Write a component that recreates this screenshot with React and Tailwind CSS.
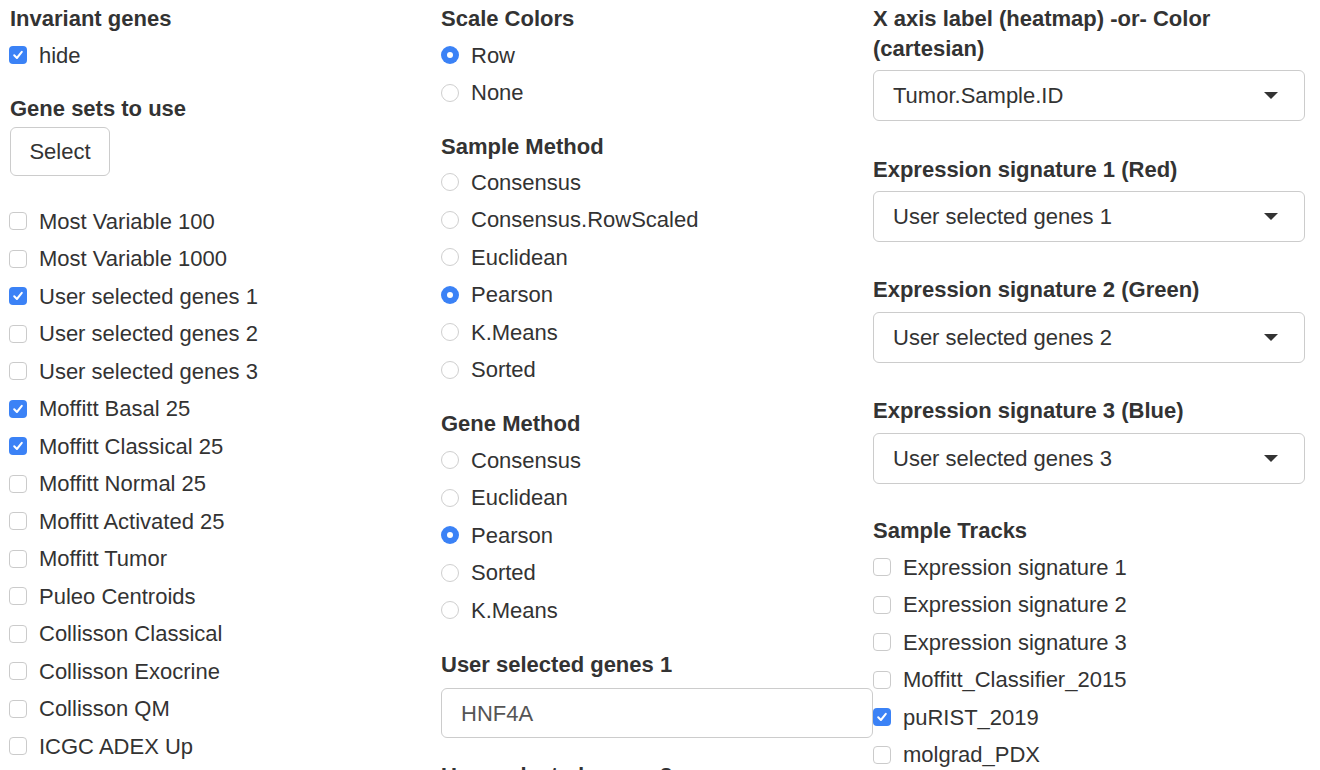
import React from "react";

const geneSets = [
  ["Most Variable 100", false],
  ["Most Variable 1000", false],
  ["User selected genes 1", true],
  ["User selected genes 2", false],
  ["User selected genes 3", false],
  ["Moffitt Basal 25", true],
  ["Moffitt Classical 25", true],
  ["Moffitt Normal 25", false],
  ["Moffitt Activated 25", false],
  ["Moffitt Tumor", false],
  ["Puleo Centroids", false],
  ["Collisson Classical", false],
  ["Collisson Exocrine", false],
  ["Collisson QM", false],
  ["ICGC ADEX Up", false],
];

const tracks = [
  ["Expression signature 1", false],
  ["Expression signature 2", false],
  ["Expression signature 3", false],
  ["Moffitt_Classifier_2015", false],
  ["puRIST_2019", true],
  ["molgrad_PDX", false],
];

const Check = ({ on }) =>
  on ? (
    <span className="w-[18px] h-[18px] rounded-[4px] bg-[#3b82f6] flex items-center justify-center shrink-0">
      <svg width="12" height="12" viewBox="0 0 12 12">
        <path d="M2.2 6.3 L4.9 9 L9.8 2.9" fill="none" stroke="white" strokeWidth="2" strokeLinecap="round" strokeLinejoin="round" />
      </svg>
    </span>
  ) : (
    <span className="block w-[18px] h-[18px] rounded-[4px] border border-[#cbcbcb] bg-white shrink-0" />
  );

const Radio = ({ on }) =>
  on ? (
    <span className="w-[18px] h-[18px] rounded-full bg-[#3b82f6] flex items-center justify-center shrink-0">
      <span className="w-[6px] h-[6px] rounded-full bg-white" />
    </span>
  ) : (
    <span className="block w-[18px] h-[18px] rounded-full border border-[#cfcfcf] bg-white shrink-0" />
  );

const CheckRow = ({ label, on }) => (
  <div className="flex items-center h-[30px]">
    <Check on={on} />
    <span className="ml-[12px]">{label}</span>
  </div>
);

const RadioRow = ({ label, on }) => (
  <div className="flex items-center h-[30px]">
    <Radio on={on} />
    <span className="ml-[12px]">{label}</span>
  </div>
);

const Label = ({ children, className = "" }) => (
  <div className={`font-bold leading-[30px] ${className}`}>{children}</div>
);

const Select = ({ value, className = "" }) => (
  <div className={`h-[51px] rounded-[6px] border-[1.5px] border-[#cccccc] flex items-center justify-between pl-[19px] pr-[26px] ${className}`}>
    <span>{value}</span>
    <svg width="14" height="7" viewBox="0 0 14 7">
      <path d="M0 0 H14 L7 7 Z" fill="#333" />
    </svg>
  </div>
);

const App = () => {
  return (
    <div
      className="w-[1320px] h-[770px] overflow-hidden bg-white text-[#333] text-[22px] grid grid-cols-[432px_432px_432px] pl-[9px]"
      style={{ fontFamily: '"Liberation Sans", Arial, sans-serif' }}
    >
      {/* Left column */}
      <div className="pt-[4px]">
        <Label className="ml-[1px]">Invariant genes</Label>
        <div className="mt-[6px]">
          <CheckRow label="hide" on />
        </div>
        <Label className="mt-[24px] ml-[1px]">Gene sets to use</Label>
        <button className="mt-[3px] ml-[1px] w-[100px] h-[49px] rounded-[6px] border-[1.5px] border-[#cccccc] bg-white text-[#333]">
          Select
        </button>
        <div className="mt-[30px] flex flex-col gap-[7.5px]">
          {geneSets.map(([label, on]) => (
            <CheckRow key={label} label={label} on={on} />
          ))}
        </div>
      </div>

      {/* Middle column */}
      <div className="pt-[4px]">
        <Label>Scale Colors</Label>
        <div className="mt-[6px] flex flex-col gap-[7.5px]">
          <RadioRow label="Row" on />
          <RadioRow label="None" />
        </div>
        <Label className="mt-[24.5px]">Sample Method</Label>
        <div className="mt-[5px] flex flex-col gap-[7.5px]">
          {["Consensus", "Consensus.RowScaled", "Euclidean", "Pearson", "K.Means", "Sorted"].map((m) => (
            <RadioRow key={m} label={m} on={m === "Pearson"} />
          ))}
        </div>
        <Label className="mt-[24.5px]">Gene Method</Label>
        <div className="mt-[6px] flex flex-col gap-[7.5px]">
          {["Consensus", "Euclidean", "Pearson", "Sorted", "K.Means"].map((m) => (
            <RadioRow key={m} label={m} on={m === "Pearson"} />
          ))}
        </div>
        <Label className="mt-[25px]">User selected genes 1</Label>
        <div className="mt-[8px] h-[50px] w-[432px] rounded-[6px] border-[1.5px] border-[#cccccc] flex items-center pl-[19px] text-[#555]">
          HNF4A
        </div>
        <Label className="mt-[23px]">User selected genes 2</Label>
      </div>

      {/* Right column */}
      <div className="pt-[4px]">
        <Label>
          X axis label (heatmap) -or- Color
          <br />
          (cartesian)
        </Label>
        <Select value="Tumor.Sample.ID" className="mt-[6px]" />
        <Label className="mt-[34px]">Expression signature 1 (Red)</Label>
        <Select value="User selected genes 1" className="mt-[6px]" />
        <Label className="mt-[33px]">Expression signature 2 (Green)</Label>
        <Select value="User selected genes 2" className="mt-[7px]" />
        <Label className="mt-[33px]">Expression signature 3 (Blue)</Label>
        <Select value="User selected genes 3" className="mt-[7px]" />
        <Label className="mt-[32px]">Sample Tracks</Label>
        <div className="mt-[6px] flex flex-col gap-[7.5px]">
          {tracks.map(([label, on]) => (
            <CheckRow key={label} label={label} on={on} />
          ))}
        </div>
      </div>
    </div>
  );
};

export default App;
